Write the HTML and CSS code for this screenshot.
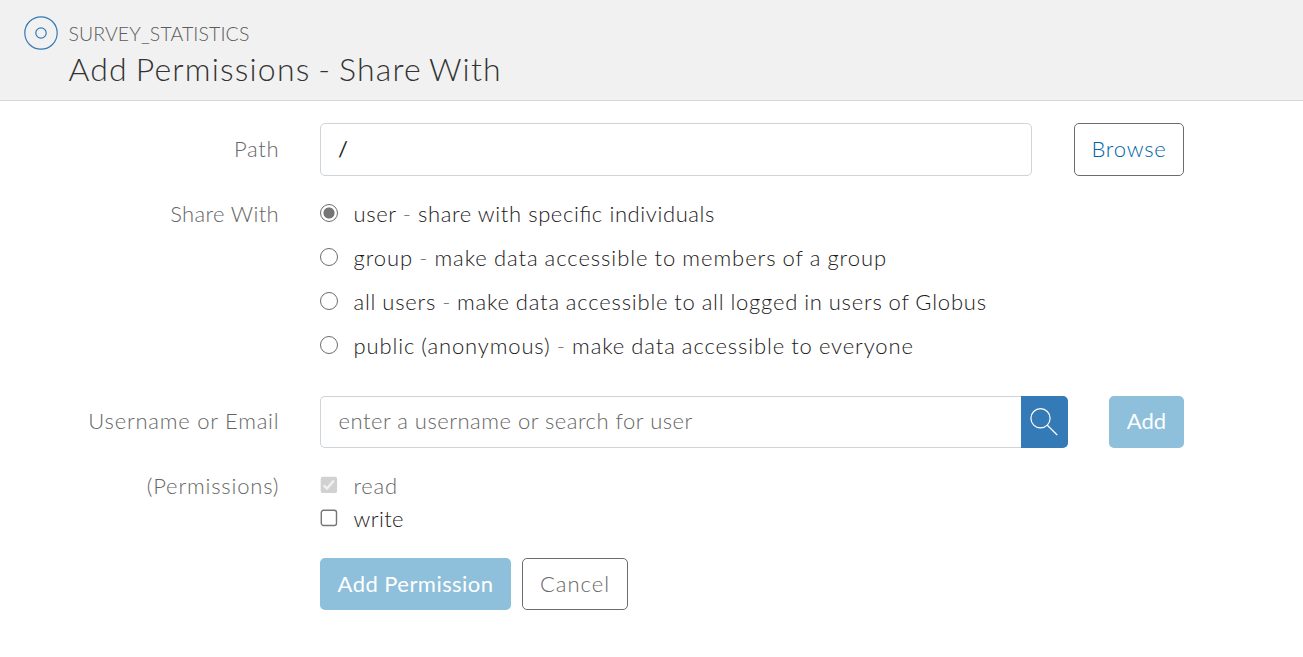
FILE: index.html
```
<!DOCTYPE html>
<html lang="en">
<head>
<meta charset="utf-8">
<title>Add Permissions - Share With</title>
<link rel="stylesheet" href="styles.css">
</head>
<body>
<header class="header">
  <svg class="header-icon" width="34" height="34" viewBox="0 0 34 34" fill="none" stroke="#347ab7" stroke-width="1.2"><circle cx="17" cy="17" r="16.2"/><circle cx="17" cy="17" r="5.2"/></svg>
  <div>
    <div class="collection"><span>SURVEY_STATISTICS</span></div>
    <h1 class="title"><span>Add Permissions - Share With</span></h1>
  </div>
</header>
<form class="form">
  <div class="row row-path">
    <label class="label" for="path"><span class="t-path">Path</span></label>
    <input class="input path-input" id="path" type="text" value="/">
    <button class="btn btn-outline btn-browse" type="button"><span>Browse</span></button>
  </div>
  <div class="row row-share">
    <span class="label"><span class="t-share">Share With</span></span>
    <div class="radios">
      <label class="option"><input class="radio" type="radio" name="share" checked><span class="t-user">user <i>-</i> share with specific individuals</span></label>
      <label class="option"><input class="radio" type="radio" name="share"><span class="t-group">group <i>-</i> make data accessible to members of a group</span></label>
      <label class="option"><input class="radio" type="radio" name="share"><span class="t-all">all users <i>-</i> make data accessible to all logged in users of Globus</span></label>
      <label class="option"><input class="radio" type="radio" name="share"><span class="t-public">public (anonymous) <i>-</i> make data accessible to everyone</span></label>
    </div>
  </div>
  <div class="row row-user">
    <label class="label" for="user"><span class="t-name">Username or Email</span></label>
    <div class="search">
      <input class="input search-input" id="user" type="text" placeholder="enter a username or search for user">
      <button class="search-btn" type="button" aria-label="Search"><svg width="47" height="52" viewBox="0 0 47 52" fill="none" stroke="#fff" stroke-width="1.2"><circle cx="19.5" cy="22.3" r="9.6"/><path d="M26.3 29.2L36.2 39"/></svg></button>
    </div>
    <button class="btn btn-primary btn-add" type="button"><span>Add</span></button>
  </div>
  <div class="row row-perms">
    <span class="label"><span class="t-perms">(Permissions)</span></span>
    <div class="checks">
      <label class="check-option disabled"><svg class="box" width="18" height="18" viewBox="0 0 18 18"><rect x=".7" y=".7" width="16.4" height="16.4" rx="2.2" fill="#d1d1d1"/><path d="M3.7 9.3L7 12.5L13.9 4.6" fill="none" stroke="#f2f2f2" stroke-width="2.3"/></svg><span class="t-read">read</span></label>
      <label class="check-option"><svg class="box" width="18" height="18" viewBox="0 0 18 18"><rect x="1.3" y="1.3" width="15.2" height="15.2" rx="2.2" fill="#fff" stroke="#767676" stroke-width="1.4"/></svg><span class="t-write">write</span></label>
    </div>
  </div>
  <div class="actions">
    <button class="btn btn-primary btn-submit" type="button"><span>Add Permission</span></button>
    <button class="btn btn-outline btn-cancel" type="button"><span>Cancel</span></button>
  </div>
</form>
</body>
</html>
```
FILE: styles.css
```
* { box-sizing: border-box; }
body { margin: 0; background: #fff; color: #1c191a; font: 300 22px/32px Lato, sans-serif; }
button, input { font: inherit; }
span { white-space: nowrap; }
.header { display: flex; gap: 10.5px; height: 101px; padding: 16px 0 0 24px; background: #f1f1f1; border-bottom: 1px solid #d8d8d8; }
.header-icon { flex: none; }
.collection { height: 35px; font-size: 19.5px; line-height: 36px; letter-spacing: .1px; color: #5c5c5c; }
.title { margin: 0; font-size: 32px; line-height: 36px; font-weight: 300; letter-spacing: 1.18px; word-spacing: -2.1px; color: #333; }
.form { padding-top: 22px; }
.row { display: flex; align-items: flex-start; }
.label { flex: none; width: 279px; margin-right: 41px; text-align: right; color: #666; }
.row-path { height: 81px; }
.row-path .label { padding-top: 10px; }
.row-user .label { padding-top: 9px; }
.input { height: 53px; margin: 0; padding: 0 18px 2px; border: 1px solid #ced4da; border-radius: 5px; background: #fff; color: #231f20; outline: 0; }
.path-input { width: 712px; margin-right: 42px; padding-left: 17px; font-weight: 400; }
.btn { flex: none; height: 52px; padding: 0; border-radius: 5px; border: 0; text-align: center; }
.btn-outline { border: 1px solid #6c6c6c; background: #fff; color: #666; }
.btn-primary { background: #8ec0db; color: #fff; font-weight: 400; }
.btn-browse { width: 110px; height: 53px; padding-bottom: 2px; color: #0064a8; letter-spacing: .75px; }
.row-share { height: 192px; margin-top: -6px; }
.option { display: flex; height: 44px; }
.option i { font-style: normal; color: #777; }
.radio { appearance: none; flex: none; width: 18px; height: 18px; margin: 6px 15.5px 0 0; border: 1.4px solid #6c6c6c; border-radius: 50%; }
.radio:checked { background: radial-gradient(circle, #767676 5.2px, #fff 5.9px); }
.row-user { height: 74px; margin-top: 6px; }
.search { display: flex; width: 748px; margin-right: 41px; }
.search-input { width: 701px; height: 52px; border-right: 0; border-radius: 5px 0 0 5px; padding: 0 18px 3px 17.5px; letter-spacing: .5px; }
.search-input::placeholder { color: #666; opacity: 1; }
.search-btn { width: 47px; height: 52px; padding: 0; border: 0; border-radius: 0 5px 5px 0; background: #347ab7; }
.search-btn svg { display: block; }
.btn-add { width: 75px; padding-bottom: 2px; }
.row-perms { height: 88px; }
.check-option { display: flex; height: 33px; }
.disabled { color: #666; }
.box { flex: none; margin: 6px 15.5px 0 0; }
.actions { display: flex; gap: 11px; padding-left: 320px; }
.btn-submit { width: 191px; letter-spacing: .45px; }
.btn-cancel { width: 106px; letter-spacing: 1px; }
.t-path { letter-spacing: .7px; margin-right: -.2px; }
.t-share { letter-spacing: .35px; margin-right: 0; }
.t-name { letter-spacing: .77px; margin-right: -.4px; }
.t-perms { letter-spacing: .8px; margin-right: -.3px; }
.t-user { letter-spacing: .6px; font-feature-settings: "liga" 1; }
.t-group { letter-spacing: .94px; word-spacing: -.8px; }
.t-all { letter-spacing: .8px; word-spacing: -.8px; }
.t-public { letter-spacing: .86px; word-spacing: -.6px; }
.t-read { letter-spacing: .7px; }
.t-write { letter-spacing: .4px; }
```
